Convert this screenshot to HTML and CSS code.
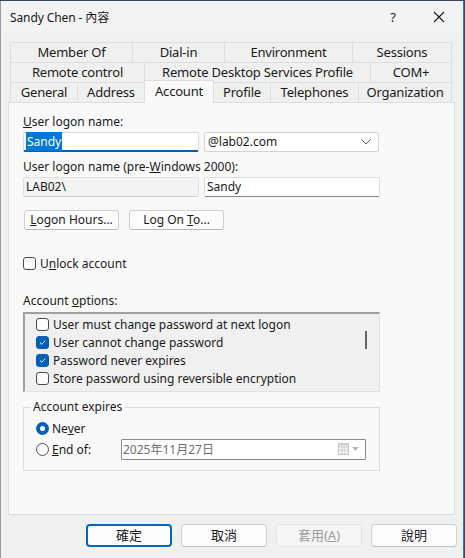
FILE: index.html
```html
<!DOCTYPE html>
<html>
<head>
<meta charset="utf-8">
<link rel="stylesheet" href="styles.css">
</head>
<body>
<div class="window">
  <div class="titlebar">
    <span class="title">Sandy Chen - 內容</span>
    <span class="tb-help">?</span>
    <span class="tb-close"><svg width="12" height="12" viewBox="0 0 12 12"><path d="M1 1L11 11M11 1L1 11" stroke="#1a1a1a" stroke-width="1.1" fill="none"/></svg></span>
  </div>

  <div class="tabs">
    <div class="tabrow">
      <div class="tab w122">Member Of</div>
      <div class="tab w92">Dial-in</div>
      <div class="tab w128">Environment</div>
      <div class="tab w100">Sessions</div>
    </div>
    <div class="tabrow">
      <div class="tab w134">Remote control</div>
      <div class="tab w226">Remote Desktop Services Profile</div>
      <div class="tab w82">COM+</div>
    </div>
    <div class="tabrow">
      <div class="tab w67">General</div>
      <div class="tab w67">Address</div>
      <div class="tab w70 active">Account</div>
      <div class="tab w56">Profile</div>
      <div class="tab w88">Telephones</div>
      <div class="tab w94">Organization</div>
    </div>
  </div>

  <div class="panel">
    <div class="label l1"><u>U</u>ser logon name:</div>
    <div class="fieldrow">
      <div class="input focus"><span class="sel">Sandy</span></div>
      <div class="combo"><span>@lab02.com</span>
        <svg class="chev" width="10" height="6" viewBox="0 0 10 6"><path d="M0.5 0.5L5 5L9.5 0.5" stroke="#555" stroke-width="1" fill="none"/></svg>
      </div>
    </div>
    <div class="label l2">User logon name (pre-<u>W</u>indows 2000):</div>
    <div class="fieldrow">
      <div class="input disabled">LAB02\</div>
      <div class="input plain">Sandy</div>
    </div>
    <div class="btnrow">
      <div class="btn"><u>L</u>ogon Hours...</div>
      <div class="btn">Log On <u>T</u>o...</div>
    </div>
    <div class="check unlock"><span class="box"></span><span>U<u>n</u>lock account</span></div>
    <div class="label l3">Account <u>o</u>ptions:</div>
    <div class="listbox">
      <div class="items">
        <div class="check item"><span class="box"></span><span>User must change password at next logon</span></div>
        <div class="check item"><span class="box on"><svg width="9" height="9" viewBox="0 0 9 9"><path d="M2 4.6L3.8 6.3L7.2 2.6" stroke="#fff" stroke-width="1" fill="none"/></svg></span><span>User cannot change password</span></div>
        <div class="check item"><span class="box on"><svg width="9" height="9" viewBox="0 0 9 9"><path d="M2 4.6L3.8 6.3L7.2 2.6" stroke="#fff" stroke-width="1" fill="none"/></svg></span><span>Password never expires</span></div>
        <div class="check item"><span class="box"></span><span>Store password using reversible encryption</span></div>
      </div>
      <div class="scroll"><span class="thumb"></span></div>
    </div>
    <div class="group">
      <div class="legend">Account expires</div>
      <div class="radio r1"><span class="dot on"></span><span>Ne<u>v</u>er</span></div>
      <div class="radio r2"><span class="dot"></span><span class="endlbl"><u>E</u>nd of:</span>
        <div class="date"><span>2025年11月27日</span>
          <span class="cal">
            <svg width="26" height="14" viewBox="0 0 26 14">
              <rect x="1.5" y="1.5" width="10" height="11" fill="#f4f4f4" stroke="#c4c4c4"/>
              <path d="M2 5H11M2 8H11M5 4V12M8 4V12" stroke="#d2d2d2" stroke-width="1"/>
              <rect x="1.5" y="1.5" width="10" height="2" fill="#cfcfcf"/>
              <path d="M15 5L22 5L18.5 9Z" fill="#b5b5b5"/>
            </svg>
          </span>
        </div>
      </div>
    </div>
  </div>

  <div class="footer">
    <div class="fbtn default">確定</div>
    <div class="fbtn">取消</div>
    <div class="fbtn dis">套用(<u>A</u>)</div>
    <div class="fbtn">說明</div>
  </div>
</div>
</body>
</html>
```

FILE: styles.css
```css
* { box-sizing: border-box; }
html, body { margin: 0; padding: 0; }
body {
  width: 465px; height: 558px;
  background: #3a4660;
  font-family: "Noto Sans", "Noto Sans CJK TC", sans-serif;
  font-size: 12px;
  color: #1a1a1a;
  overflow: hidden;
}
.window {
  width: 464px; height: 557px;
  margin-top: 1px;
  background: #f0f0f0;
  border-right: 1px solid #2b7bc0;
  border-left: 1px solid #9a9a9a;
  position: relative;
}
.titlebar {
  height: 31px;
  background: #f3f3f3;
  display: flex; align-items: center;
  padding-left: 9px;
}
.title { font-size: 12px; flex: 1; letter-spacing: -0.1px; }
.tb-help { width: 46px; text-align: center; font-size: 13px; margin-right: 0; }
.tb-close { width: 46px; display: flex; justify-content: center; margin-right: 1px; }

.tabs { margin-top: 10px; padding-left: 9px; position: relative; z-index: 2; }
.tabrow { display: flex; height: 20px; }
.tab {
  height: 20px;
  border: 1px solid #dedede;
  border-right: none;
  border-bottom: none;
  background: #f0f0f0;
  font-size: 13px;
  line-height: 18px;
  text-align: center;
  white-space: nowrap;
  letter-spacing: -0.2px;
}
.tabrow .tab:last-child { border-right: 1px solid #dedede; }
.tab.active {
  height: 23px;
  margin-top: -2px;
  background: #f9f9f9;
  border: 1px solid #dedede;
  border-bottom: none;
  line-height: 20px;
  position: relative;
  z-index: 3;
}
.tab.active + .tab { border-left: none; }
.w122 { width: 122px; } .w92 { width: 92px; } .w128 { width: 128px; } .w100 { width: 100px; }
.w134 { width: 134px; } .w226 { width: 226px; } .w82 { width: 82px; }
.w67 { width: 67px; } .w70 { width: 70px; } .w56 { width: 56px; } .w88 { width: 88px; } .w94 { width: 94px; }

.panel {
  margin-left: 7px;
  width: 447px; height: 413px;
  background: #f9f9f9;
  border: 1px solid #dedede;
  padding-left: 14px;
  display: flex; flex-direction: column;
  position: relative; z-index: 1;
}
.label { height: 16px; line-height: 16px; }
.l1 { margin-top: 11px; }
.l2 { margin-top: 7px; }
.l3 { margin-top: 21px; }
.fieldrow { display: flex; gap: 5px; margin-top: 2px; }
.input, .combo {
  width: 176px; height: 20px;
  border: 1px solid #dcdcdc;
  border-radius: 2px;
  background: #fff;
  padding-left: 2px;
  line-height: 18px;
  font-size: 12px;
}
.input.focus { border-bottom: 2px solid #005fb8; padding-left: 2px; }
.sel { background: #0078d7; color: #fff; padding: 1px 1px; }
.input.disabled { background: #f3f3f3; border-color: #e0e0e0; border-bottom-color: #cfcfcf; }
.input.plain { width: 176px; border-bottom-color: #8a8a8a; }
.combo {
  width: 175px;
  display: flex; align-items: center; justify-content: space-between;
  padding-left: 3px; padding-right: 7px;
  border-color: #d4d4d4;
}
.btnrow { display: flex; gap: 10px; margin-top: 13px; padding-left: 1px; }
.btn {
  width: 95px; height: 20px;
  border: 1px solid #d0d0d0;
  border-bottom-color: #b8b8b8;
  border-radius: 3px;
  background: #fdfdfd;
  text-align: center;
  line-height: 18px;
}
.check { display: flex; align-items: center; height: 18px; }
.box {
  width: 13px; height: 13px;
  border: 1px solid #4a4a4a;
  border-radius: 3px;
  background: #fdfdfd;
  margin-right: 4px;
  display: flex; align-items: center; justify-content: center;
  flex: none;
}
.box.on { background: #005fb8; border-color: #005fb8; }
.unlock { margin-top: 24px; margin-left: 0px; }
.listbox {
  margin-top: 3px;
  width: 357px; height: 80px;
  border: 1px solid #e2e2e2;
  border-top: 2px solid #a0a0a0;
  border-left: 2px solid #a0a0a0;
  background: #f0f0f0;
  display: flex;
}
.items { flex: 1; padding-left: 11px; padding-top: 1px; }
.item { height: 18px; }
.scroll { width: 15px; position: relative; }
.thumb {
  position: absolute; left: 1px; top: 17px;
  width: 2px; height: 18px; background: #666;
}
.group {
  margin-top: 15px;
  width: 357px; height: 64px;
  border: 1px solid #dcdcdc;
  position: relative;
  padding-left: 12px;
  padding-top: 10px;
}
.legend {
  position: absolute; left: 7px; top: -9px;
  background: #f9f9f9;
  padding: 0 3px 0 2px;
  line-height: 16px;
}
.radio { display: flex; align-items: center; height: 20px; }
.r2 { margin-top: 1px; }
.dot {
  width: 13px; height: 13px;
  border: 1px solid #555;
  border-radius: 50%;
  background: #fdfdfd;
  margin-right: 3px;
  flex: none;
}
.dot.on { border: 4px solid #005fb8; background: #fff; }
.endlbl { width: 69px; }
.date {
  width: 245px; height: 21px;
  border: 1px solid #8a8a8a;
  border-radius: 1px;
  background: #fff;
  color: #6d6d6d;
  display: flex; align-items: center; justify-content: space-between;
  padding-left: 1px; padding-right: 2px;
}
.cal { display: flex; }

.footer {
  display: flex; justify-content: flex-end; gap: 9px;
  padding-right: 6px;
  margin-top: 9px;
}
.fbtn {
  width: 86px; height: 23px;
  border: 1px solid #d0d0d0;
  border-bottom-color: #bcbcbc;
  border-radius: 4px;
  background: #fdfdfd;
  text-align: center;
  line-height: 21px;
  font-size: 13px;
}
.fbtn.default { border: 2px solid #0067c0; line-height: 19px; }
.fbtn.dis { background: #f5f5f5; color: #9d9d9d; border-color: #e5e5e5; }
```
